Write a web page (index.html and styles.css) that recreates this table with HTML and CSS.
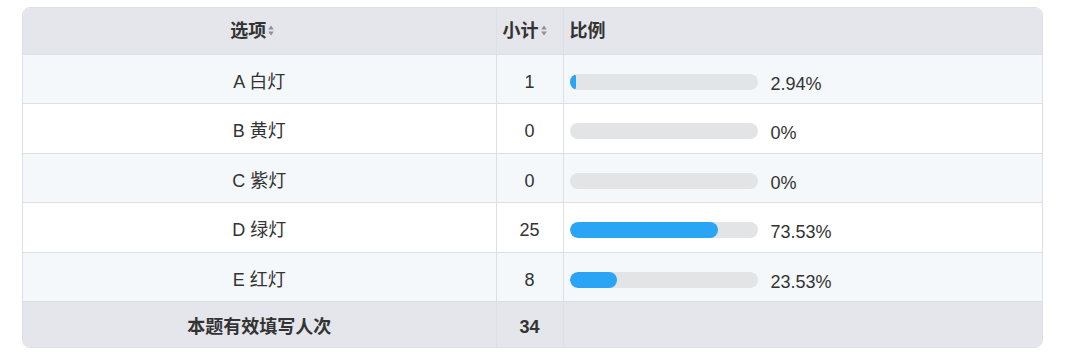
FILE: index.html
```html
<!DOCTYPE html>
<html lang="zh-CN">
<head>
<meta charset="utf-8">
<link rel="stylesheet" href="styles.css">
</head>
<body>
<div class="wrap">
  <table class="stats">
    <colgroup>
      <col class="c-opt">
      <col class="c-cnt">
      <col class="c-pct">
    </colgroup>
    <thead>
      <tr>
        <th class="center">选项<svg class="sort" width="6" height="11" viewBox="0 0 6 11"><path d="M3 0.5L5.8 4.6H0.2z" fill="#8f9196"/><path d="M3 10.5L5.8 6.4H0.2z" fill="#8f9196"/></svg></th>
        <th class="center">小计<svg class="sort" width="6" height="11" viewBox="0 0 6 11"><path d="M3 0.5L5.8 4.6H0.2z" fill="#8f9196"/><path d="M3 10.5L5.8 6.4H0.2z" fill="#8f9196"/></svg></th>
        <th class="left">比例</th>
      </tr>
    </thead>
    <tbody>
      <tr class="odd h49">
        <td class="center">A 白灯</td>
        <td class="center">1</td>
        <td><div class="pct"><div class="track"><div class="fill" style="width:6px"></div></div><span class="val">2.94%</span></div></td>
      </tr>
      <tr class="h50">
        <td class="center">B 黄灯</td>
        <td class="center">0</td>
        <td><div class="pct"><div class="track"></div><span class="val">0%</span></div></td>
      </tr>
      <tr class="odd h49">
        <td class="center">C 紫灯</td>
        <td class="center">0</td>
        <td><div class="pct"><div class="track"></div><span class="val">0%</span></div></td>
      </tr>
      <tr class="h50">
        <td class="center">D 绿灯</td>
        <td class="center">25</td>
        <td><div class="pct"><div class="track"><div class="fill" style="width:148px"></div></div><span class="val">73.53%</span></div></td>
      </tr>
      <tr class="odd h49">
        <td class="center">E 红灯</td>
        <td class="center">8</td>
        <td><div class="pct"><div class="track"><div class="fill" style="width:47px"></div></div><span class="val">23.53%</span></div></td>
      </tr>
    </tbody>
    <tfoot>
      <tr>
        <td class="center">本题有效填写人次</td>
        <td class="center">34</td>
        <td></td>
      </tr>
    </tfoot>
  </table>
</div>
</body>
</html>
```

FILE: styles.css
```css
html, body {
  margin: 0;
  padding: 0;
  background: #ffffff;
}

body {
  font-family: "Liberation Sans", "Noto Sans CJK SC", sans-serif;
  font-size: 18px;
  color: #333333;
}

.wrap {
  margin: 7px 0 0 22px;
  width: 1019px;
  border: 1px solid #dcdfe4;
  border-radius: 8px;
  overflow: hidden;
}

.stats {
  width: 100%;
  border-collapse: collapse;
  table-layout: fixed;
}

.c-opt { width: 473px; }
.c-cnt { width: 67px; }

.stats th,
.stats td {
  padding: 0 6px;
  border-right: 1px solid #dcdfe4;
  border-bottom: 1px solid #dcdfe4;
  vertical-align: middle;
  white-space: nowrap;
  line-height: 20px;
}

.stats th:last-child,
.stats td:last-child {
  border-right: none;
}

.stats thead th {
  background: #e4e6eb;
  height: 46px;
  font-weight: bold;
}

.stats tfoot td {
  background: #e4e6eb;
  height: 41px;
  font-weight: bold;
  border-bottom: none;
  padding-top: 4px;
}

.stats tbody tr { background: #ffffff; }
.stats tbody tr.odd { background: #f5f8fb; }
.stats tbody tr.h49 td { height: 43px; padding-top: 5px; }
.stats tbody tr.h50 td { height: 44px; padding-top: 5px; }

.center { text-align: center; }
.left { text-align: left; }

.sort {
  display: inline-block;
  vertical-align: middle;
  margin-left: 2px;
  margin-right: 14px;
  margin-top: -3px;
}

.pct {
  display: flex;
  align-items: center;
}

.track {
  width: 188px;
  height: 16px;
  border-radius: 8px;
  background: #e3e4e6;
  overflow: hidden;
  flex: none;
}

.fill {
  height: 100%;
  border-radius: 8px;
  background: #2aa4f4;
}

.val {
  margin-left: 13px;
  padding-top: 4px;
}
```
